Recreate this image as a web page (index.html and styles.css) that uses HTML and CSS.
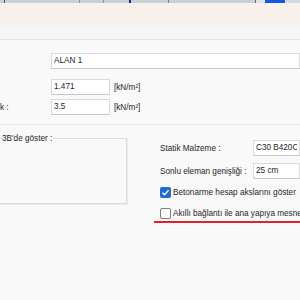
FILE: index.html
```html
<!DOCTYPE html>
<html lang="tr">
<head>
  <meta charset="UTF-8">
  <title>Alan Özellikleri</title>
  <link rel="stylesheet" href="styles.css">
</head>
<body>
  <div class="ruler">
    <span class="tick t-purple"></span>
    <span class="tick t-green"></span>
    <span class="tick t-grey"></span>
    <span class="tick t-navy"></span>
    <span class="tick t-grey2"></span>
    <span class="tick t-purple2"></span>
    <span class="ruler-box"></span>
    <span class="ruler-blue"></span>
    <span class="ruler-end"></span>
  </div>
  <div class="titlebar"></div>
  <div class="toolbar"></div>

  <div class="form">
    <div class="row row-name">
      <label class="lbl"></label>
      <input class="field wide" type="text" value="ALAN 1">
    </div>
    <div class="row row-dead">
      <label class="lbl"></label>
      <input class="field short" type="text" value="1.471">
      <span class="unit">[kN/m²]</span>
    </div>
    <div class="row">
      <label class="lbl">k :</label>
      <input class="field short" type="text" value="3.5">
      <span class="unit">[kN/m²]</span>
    </div>
  </div>

  <div class="section">
    <fieldset class="group">
      <legend>3B'de göster :</legend>
    </fieldset>

    <div class="side">
      <div class="side-row">
        <label class="side-lbl">Statik Malzeme :</label>
        <input class="field side-field" type="text" value="C30 B420C">
      </div>
      <div class="side-row">
        <label class="side-lbl">Sonlu eleman genişliği :</label>
        <input class="field side-field" type="text" value="25 cm">
      </div>
      <div class="cb-row">
        <span class="box checked">
          <svg width="11" height="11" viewBox="0 0 11 11"><path d="M2.5 5.8 L4.5 7.8 L8.6 3.3" fill="none" stroke="#fff" stroke-width="1.3"/></svg>
        </span>
        <span>Betonarme hesap akslarını göster</span>
      </div>
      <div class="cb-row marked">
        <span class="box"></span>
        <span>Akıllı bağlantı ile ana yapıya mesnet</span>
      </div>
    </div>
  </div>
</body>
</html>
```

FILE: styles.css
```css
body {
  margin: 0;
  background-color: #f9f9f9;
  color: #1e1e1e;
  font-family: 'Liberation Sans', Arial, sans-serif;
  font-size: 8.2px;
  overflow: hidden;
  white-space: nowrap;
}
.ruler {
  display: flex;
  height: 3px;
  background-color: #c9d1d6;
}
.tick {
  width: 1px;
}
.t-purple { margin-left: 4px; background-color: #5a3e9c; }
.t-green { margin-left: 74px; background-color: #6aa57a; }
.t-grey { margin-left: 23px; background-color: #8b98a2; }
.t-navy { margin-left: 25px; width: 2px; background-color: #23278a; }
.t-grey2 { margin-left: 37px; background-color: #75808a; }
.t-purple2 { margin-left: 86px; background-color: #6b5f95; }
.ruler-box {
  width: 9px;
  background-color: #dfe3e6;
}
.ruler-blue {
  width: 20px;
  background-color: #1653e6;
}
.ruler-end {
  flex: 1;
  background-color: #d3d9dd;
}
.titlebar {
  height: 22px;
  background-color: #f8f0ea;
}
.toolbar {
  height: 14px;
  background-color: #f6f6f6;
  border-bottom: 1px solid #e3e3e3;
}
.form {
  padding: 13px 0 9px;
  border-bottom: 1px solid #e3e3e3;
}
.row {
  display: flex;
  align-items: center;
  height: 16px;
}
.row-name {
  margin-bottom: 10px;
}
.row-dead {
  margin-bottom: 4px;
}
.lbl {
  width: 51px;
}
.field {
  box-sizing: border-box;
  height: 16px;
  padding: 0 2px 1px;
  border: 1px solid #dadada;
  border-bottom-color: #c8c8c8;
  background-color: #fff;
  color: #1e1e1e;
  font: inherit;
  outline: none;
}
.wide {
  flex: 1;
  min-width: 0;
}
.short {
  width: 59px;
}
.unit {
  margin-left: 4px;
}
.section {
  display: flex;
  align-items: flex-start;
  padding-top: 8px;
}
.group {
  flex: none;
  width: 137px;
  height: 70px;
  box-sizing: border-box;
  margin: 1px 0 0 -10px;
  padding: 0;
  border: 1px solid #dcdcdc;
  box-shadow: 1px 1px 0 #ececec;
}
.group legend {
  margin-left: 11px;
  padding: 0 1px 0 0;
}
.side {
  margin-left: 33px;
  padding-top: 7px;
  flex: 1;
  min-width: 0;
}
.side-row {
  display: flex;
  align-items: center;
  height: 16px;
  margin-bottom: 7px;
}
.side-lbl {
  width: 93px;
  flex: none;
}
.side-field {
  flex: 1;
  min-width: 0;
}
.cb-row {
  display: flex;
  align-items: center;
  gap: 2px;
  height: 13px;
  margin-bottom: 7px;
}
.cb-row.marked {
  margin-left: -6px;
  padding-left: 6px;
  height: 15px;
  border-bottom: 2px solid #e3212b;
}
.box {
  flex: none;
  box-sizing: border-box;
  width: 11px;
  height: 11px;
  border: 1px solid #7d7d7d;
  border-radius: 2px;
  background-color: #fdfdfd;
}
.box.checked {
  border: none;
  background-color: #1d6cce;
}
.box svg {
  display: block;
}
```
